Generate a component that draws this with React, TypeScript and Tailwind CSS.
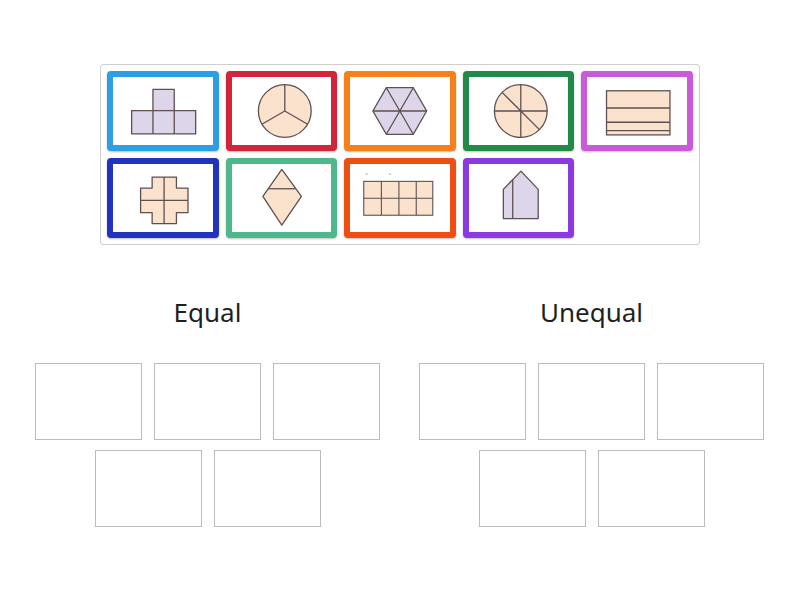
const LAV = '#ddd5ea';
const PEACH = '#fbe2cd';
const INK = '#5e5050';

type Tile = { color: string; shape: React.ReactNode };

const line = { stroke: INK, strokeWidth: 1.3, fill: 'none' } as const;

const tiles: Tile[] = [
  {
    color: 'border-[#2a9fe3]',
    shape: (
      <>
        <path d="M24.7 39.7H46.1V18.3H67.5V39.7H89V63H24.7Z" fill={LAV} stroke={INK} strokeWidth={1.3} />
        <path d="M46.1 39.7V63M67.5 39.7V63M46.1 39.7H67.5" {...line} />
      </>
    ),
  },
  {
    color: 'border-[#d2253a]',
    shape: (
      <>
        <circle cx={59} cy={40} r={26.5} fill={PEACH} stroke={INK} strokeWidth={1.3} />
        <path d="M59 40V13.5M59 40L36.05 53.25M59 40L81.95 53.25" {...line} />
      </>
    ),
  },
  {
    color: 'border-[#f68019]',
    shape: (
      <>
        <path d="M83 40L69.5 63.38H42.5L29 40L42.5 16.62H69.5Z" fill={LAV} stroke={INK} strokeWidth={1.3} />
        <path d="M29 40H83M42.5 16.62L69.5 63.38M69.5 16.62L42.5 63.38" {...line} />
      </>
    ),
  },
  {
    color: 'border-[#1f8b47]',
    shape: (
      <>
        <circle cx={58} cy={40} r={26.5} fill={PEACH} stroke={INK} strokeWidth={1.3} />
        <path d="M58 13.5V66.5M31.5 40H84.5M39.26 21.26L76.74 58.74" {...line} />
      </>
    ),
  },
  {
    color: 'border-[#c95ad9]',
    shape: (
      <>
        <rect x={25.6} y={19.7} width={63.7} height={44.3} fill={PEACH} stroke={INK} strokeWidth={1.3} />
        <path d="M25.6 37H89.3M25.6 51.3H89.3M25.6 59.7H89.3" {...line} />
      </>
    ),
  },
  {
    color: 'border-[#2233bf]',
    shape: (
      <>
        <path
          d="M45.3 19H69.7V30H81.3V54.7H69.7V65.7H45.3V54.7H33.7V30H45.3Z"
          fill={PEACH}
          stroke={INK}
          strokeWidth={1.3}
          strokeLinejoin="round"
        />
        <path d="M57.3 19V65.7M33.7 42.3H81.3" {...line} />
      </>
    ),
  },
  {
    color: 'border-[#4cb88b]',
    shape: (
      <>
        <path d="M56 11.3L75.7 38.3L56 67.3L37 38.3Z" fill={PEACH} stroke={INK} strokeWidth={1.3} strokeLinejoin="round" />
        <path d="M42.1 30.7H69.9" {...line} />
      </>
    ),
  },
  {
    color: 'border-[#f04d12]',
    shape: (
      <>
        <rect x={19.8} y={23.3} width={69.3} height={34} fill={PEACH} stroke={INK} strokeWidth={1.1} />
        <path d="M37.5 23.3V57.3M55.1 23.3V57.3M72.5 23.3V57.3M19.8 40.3H89.1" stroke={INK} strokeWidth={1.1} fill="none" />
        <path d="M21.5 16H23.8M45 16H47.3" stroke="#9a9090" strokeWidth={0.8} fill="none" />
      </>
    ),
  },
  {
    color: 'border-[#8a3ae0]',
    shape: (
      <>
        <path d="M58.2 13L75.5 31.3V60.7H40.5V31.3Z" fill={LAV} stroke={INK} strokeWidth={1.3} strokeLinejoin="round" />
        <path d="M49.9 21.6V60.7" {...line} />
      </>
    ),
  },
];

function Card({ tile }: { tile: Tile }) {
  return (
    <div className={`h-[80px] rounded-[4px] border-[6px] bg-white shadow-[0_1px_2px_rgba(0,0,0,0.25)] ${tile.color}`}>
      <svg className="block h-full w-full" viewBox="6 6 100 68">
        {tile.shape}
      </svg>
    </div>
  );
}

function DropGroup({ title }: { title: string }) {
  return (
    <div className="flex w-[345px] flex-col items-center">
      <div className="text-[26px] leading-[31px] text-[#1f1f1f]">{title}</div>
      <div className="mt-[35px] flex flex-wrap justify-center gap-x-[12px] gap-y-[10px]">
        {[0, 1, 2, 3, 4].map((i) => (
          <div key={i} className="h-[77px] w-[107px] border border-[#bcbcbc] bg-white" />
        ))}
      </div>
    </div>
  );
}

export default function App() {
  return (
    <div className="h-[600px] w-[800px] bg-white" style={{ fontFamily: '"Noto Sans", Lato, sans-serif' }}>
      <div className="ml-[100px] pt-[64px]">
        <div className="grid w-[600px] grid-cols-5 gap-[7px] rounded-[3px] border border-[#cfcfcf] p-[6px]">
          {tiles.map((t, i) => (
            <Card key={i} tile={t} />
          ))}
        </div>
      </div>
      <div className="ml-[35px] mt-[52px] flex gap-[39px]">
        <DropGroup title="Equal" />
        <DropGroup title="Unequal" />
      </div>
    </div>
  );
}
